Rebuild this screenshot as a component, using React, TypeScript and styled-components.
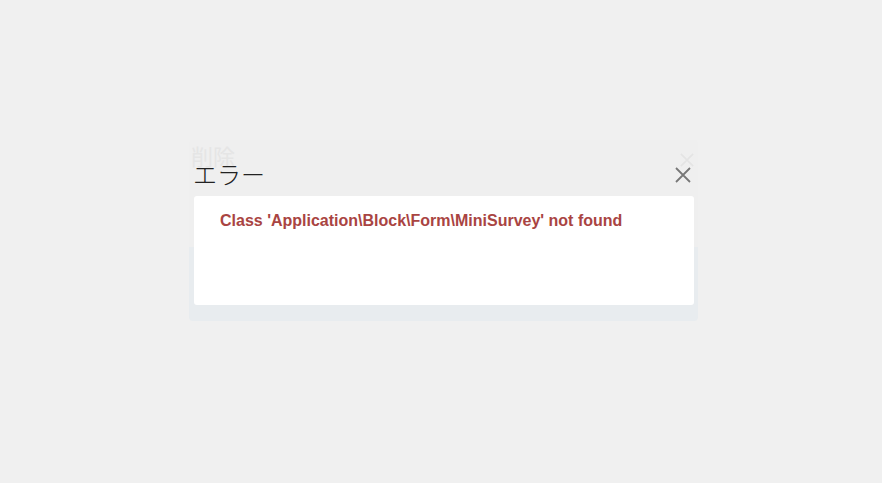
import React from 'react'
import styled, { createGlobalStyle } from 'styled-components'

const GlobalStyle = createGlobalStyle`
  html, body {
    margin: 0;
    padding: 0;
    background: #f0f0f0;
  }
  body {
    font-family: 'Liberation Sans', Arial, sans-serif;
  }
`

const Page = styled.div`
  width: 882px;
  height: 483px;
  position: relative;
  overflow: hidden;
  background: #f0f0f0;
`

// faded dialog left behind the error one
const BackDialog = styled.div`
  position: absolute;
  left: 189px;
  top: 140px;
  width: 509px;
  height: 181px;
  border-radius: 4px;
  background: #efefef;
  display: flex;
  flex-direction: column;
  overflow: hidden;
`

const BackHeader = styled.div`
  height: 105px;
  display: flex;
  align-items: flex-start;
  justify-content: space-between;
  padding: 2px 4px 0 2px;
`

const BackTitle = styled.span`
  font-family: 'Noto Sans CJK JP', sans-serif;
  font-size: 22px;
  line-height: 26px;
  color: #e5e5e5;
`

const BackClose = styled.span`
  margin-top: 11px;
  display: flex;
`

const BackBody = styled.div`
  flex: 1;
  background: #e8ecef;
`

const Dialog = styled.div`
  position: absolute;
  left: 193px;
  top: 155px;
  width: 502px;
  display: flex;
  flex-direction: column;
`

const Header = styled.div`
  height: 41px;
  display: flex;
  align-items: center;
  justify-content: space-between;
  padding-right: 2px;
`

const Title = styled.h4`
  margin: -4px 0 0;
  font-family: 'Noto Sans CJK JP', sans-serif;
  font-weight: 300;
  font-size: 24px;
  line-height: 32px;
  color: #222;
`

const CloseButton = styled.button`
  border: none;
  background: none;
  padding: 0;
  width: 20px;
  height: 20px;
  margin-top: -2px;
  display: flex;
  align-items: center;
  justify-content: center;
  cursor: pointer;
`

const Body = styled.div`
  margin-left: 1px;
  width: 500px;
  height: 109px;
  box-sizing: border-box;
  background: #fff;
  border-radius: 3px;
  padding: 14px 26px;
`

const ErrorText = styled.p`
  margin: 0;
  font-size: 16px;
  line-height: 22px;
  font-weight: bold;
  color: #a94442;
`

const Cross = ({ color, size }: { color: string; size: number }) => (
  <svg width={size} height={size} viewBox="0 0 16 16">
    <path d="M1 1L15 15M15 1L1 15" stroke={color} strokeWidth="1.8" fill="none" />
  </svg>
)

const App = () => {
  return (
    <Page>
      <GlobalStyle />
      <BackDialog>
        <BackHeader>
          <BackTitle>削除</BackTitle>
          <BackClose>
            <Cross color="#e4e4e4" size={14} />
          </BackClose>
        </BackHeader>
        <BackBody />
      </BackDialog>
      <Dialog>
        <Header>
          <Title>エラー</Title>
          <CloseButton aria-label="閉じる">
            <Cross color="#777" size={16} />
          </CloseButton>
        </Header>
        <Body>
          <ErrorText>Class 'Application\Block\Form\MiniSurvey' not found</ErrorText>
        </Body>
      </Dialog>
    </Page>
  )
}

export default App
